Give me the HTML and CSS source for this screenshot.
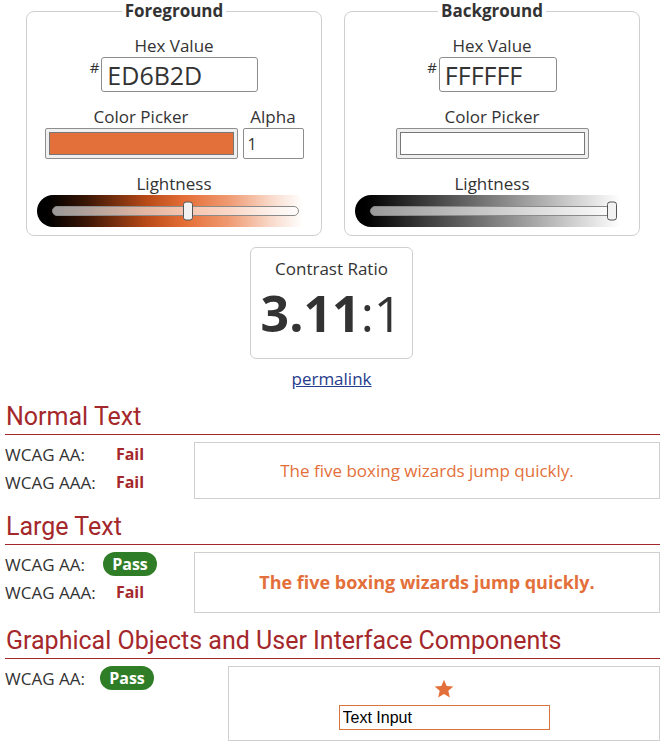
FILE: index.html
```html
<!DOCTYPE html>
<html lang="en">
<head>
<meta charset="utf-8">
<title>Contrast Checker</title>
<link rel="stylesheet" href="styles.css">
</head>
<body>
<div class="editors">
  <fieldset class="editor">
    <legend>Foreground</legend>
    <div class="field">
      <label class="lbl" for="fg">Hex Value</label>
      <div class="hex-row">
        <span class="hash">#</span>
        <input class="hex-input hex-fg" id="fg" value="ED6B2D">
      </div>
    </div>
    <div class="picker-row">
      <div class="field">
        <span class="lbl">Color Picker</span>
        <div class="picker"><div class="swatch swatch-fg"></div></div>
      </div>
      <div class="field">
        <label class="lbl" for="alpha">Alpha</label>
        <input class="alpha" id="alpha" value="1">
      </div>
    </div>
    <div class="field light">
      <span class="lbl">Lightness</span>
      <div class="slider slider-fg">
        <div class="track"><div class="thumb" style="left:55.3%"></div></div>
      </div>
    </div>
  </fieldset>
  <fieldset class="editor">
    <legend>Background</legend>
    <div class="field">
      <label class="lbl" for="bg">Hex Value</label>
      <div class="hex-row">
        <span class="hash">#</span>
        <input class="hex-input hex-bg" id="bg" value="FFFFFF">
      </div>
    </div>
    <div class="picker-row">
      <div class="field">
        <span class="lbl">Color Picker</span>
        <div class="picker"><div class="swatch swatch-bg"></div></div>
      </div>
    </div>
    <div class="field light">
      <span class="lbl">Lightness</span>
      <div class="slider slider-bg">
        <div class="track"><div class="thumb" style="left:100%"></div></div>
      </div>
    </div>
  </fieldset>
</div>

<div class="ratio-box">
  <div class="ratio-title">Contrast Ratio</div>
  <div class="ratio"><b>3.11</b>:1</div>
</div>
<div class="perma"><a href="#">permalink</a></div>

<div class="results">
  <section class="result">
    <h2>Normal Text</h2>
    <div class="result-body">
      <div class="checks">
        <div class="check"><span class="clabel">WCAG AA:</span><span class="res fail">Fail</span></div>
        <div class="check"><span class="clabel">WCAG AAA:</span><span class="res fail">Fail</span></div>
      </div>
      <div class="sample sample-normal">The five boxing wizards jump quickly.</div>
    </div>
  </section>
  <section class="result">
    <h2>Large Text</h2>
    <div class="result-body">
      <div class="checks">
        <div class="check"><span class="clabel">WCAG AA:</span><span class="res pass">Pass</span></div>
        <div class="check"><span class="clabel">WCAG AAA:</span><span class="res fail">Fail</span></div>
      </div>
      <div class="sample sample-large">The five boxing wizards jump quickly.</div>
    </div>
  </section>
  <section class="result">
    <h2>Graphical Objects and User Interface Components</h2>
    <div class="result-body">
      <div class="checks checks-ui">
        <div class="check"><span class="clabel">WCAG AA:</span><span class="res pass">Pass</span></div>
      </div>
      <div class="sample sample-ui">
        <svg class="star" viewBox="0 0 24 24" width="22" height="22" aria-hidden="true"><path d="M12 1.8l2.9 6.8 7.3.6-5.5 4.8 1.7 7.2L12 17.4l-6.4 3.8 1.7-7.2-5.5-4.8 7.3-.6z"/></svg>
        <input class="ui-input" value="Text Input">
      </div>
    </div>
  </section>
</div>
</body>
</html>
```

FILE: styles.css
```css
* { box-sizing: border-box; }
body {
  margin: 0;
  font-family: "Open Sans", "Liberation Sans", sans-serif;
  color: #333;
  background: #fff;
  font-size: 17px;
}
.editors {
  display: flex;
  gap: 22px;
  padding-left: 26px;
}
.editor {
  width: 296px;
  min-width: 0;
  margin: 0;
  padding: 12px 10px 8px;
  border: 1px solid #cfcfcf;
  border-radius: 8px;
}
.editor legend {
  margin: 0 auto;
  padding: 0 3px;
  font-weight: 700;
  font-size: 17px;
  line-height: 22px;
}
.field {
  display: flex;
  flex-direction: column;
  align-items: center;
}
.lbl {
  font-size: 17px;
  line-height: 23px;
}
.hex-row {
  display: flex;
  align-items: flex-start;
  justify-content: center;
}
.hash {
  font-size: 15px;
  line-height: 20px;
  margin-right: 2px;
}
.hex-input {
  height: 35px;
  padding: 0 5px;
  border: 1px solid #8d8d8d;
  border-radius: 3px;
  font-family: "Open Sans", sans-serif;
  font-size: 25px;
  color: #333;
  background: #fff;
}
.hex-fg { width: 157px; }
.hex-bg { width: 118px; }
.picker-row {
  display: flex;
  justify-content: center;
  gap: 5px;
  margin-top: 13px;
}
.picker {
  width: 193px;
  height: 31px;
  padding: 3px;
  background: #efefef;
  border: 1px solid #8f8f8f;
  border-radius: 2px;
}
.swatch {
  height: 100%;
  border: 1px solid #777;
}
.swatch-fg { background: #e3703a; }
.swatch-bg { background: #fff; }
.alpha {
  width: 61px;
  height: 31px;
  padding: 0 4px;
  border: 1px solid #8d8d8d;
  border-radius: 2px;
  font-family: "Open Sans", sans-serif;
  font-size: 16px;
  color: #333;
}
.light { margin-top: 13px; align-items: stretch; }
.light .lbl { text-align: center; }
.slider {
  height: 32px;
  border-radius: 16px;
  padding: 0 12px 0 15px;
  display: flex;
  align-items: center;
}
.slider-fg {
  background: linear-gradient(to right, #000 4%, #3a1605 18%, #b84a18 40%, #e56e36 54%, #ef9a72 70%, #f9dccd 86%, #fff 97%);
}
.slider-bg {
  background: linear-gradient(to right, #000 4%, #3a3a3a 25%, #8a8a8a 55%, #d0d0d0 80%, #fff 97%);
}
.track {
  position: relative;
  flex: 1;
  height: 10px;
  border: 1px solid #8a8a8a;
  border-radius: 5px;
  background: rgba(255, 255, 255, 0.6);
}
.thumb {
  position: absolute;
  top: 50%;
  width: 10px;
  height: 19px;
  margin-left: -5px;
  transform: translateY(-50%);
  background: #f2f2f2;
  border: 1px solid #555;
  border-radius: 3px;
}
.slider-bg .thumb { margin-left: -9px; }

.ratio-box {
  width: 163px;
  margin: 11px auto 0;
  padding: 9px 0 12px;
  border: 1px solid #cfcfcf;
  border-radius: 6px;
  text-align: center;
}
.ratio-title {
  font-size: 17px;
  line-height: 23px;
}
.ratio {
  font-size: 50px;
  line-height: 66px;
  color: #333;
}
.ratio b { font-weight: 700; }
.perma {
  margin-top: 8px;
  text-align: center;
  line-height: 23px;
  font-size: 17px;
}
.perma a { color: #263c8c; }

.results {
  padding: 0 3px 0 5px;
}
.result h2 {
  margin: 12px 0 0;
  padding: 0 0 2px 1px;
  font-family: Roboto, "Liberation Sans", sans-serif;
  font-weight: 400;
  font-size: 25px;
  line-height: 30px;
  color: #a4282b;
  border-bottom: 1px solid #a4282b;
}
.result + .result h2 { margin-top: 13px; }
.result-body {
  display: flex;
  align-items: flex-start;
  margin-top: 7px;
}
.checks {
  width: 189px;
  margin-top: -2px;
  flex: none;
}
.checks-ui { width: 223px; }
.check {
  display: flex;
  align-items: center;
  height: 28px;
  font-size: 17px;
}
.clabel { width: 98px; }
.checks-ui .clabel { width: 95px; }
.res {
  width: 54px;
  text-align: center;
  font-weight: 700;
  font-size: 16px;
}
.fail { color: #a4282b; }
.pass {
  height: 24px;
  line-height: 24px;
  border-radius: 12px;
  background: #2f7d26;
  color: #fff;
}
.sample {
  flex: 1;
  border: 1px solid #cfcfcf;
  text-align: center;
  color: #e3703a;
}
.sample-normal {
  padding: 16px;
  font-size: 17px;
  line-height: 23px;
}
.sample-large {
  padding: 17px;
  font-size: 18px;
  line-height: 25px;
  font-weight: 700;
}
.sample-ui {
  padding: 11px 0 10px;
  display: flex;
  flex-direction: column;
  align-items: center;
  gap: 5px;
}
.star { fill: #e3703a; display: block; }
.ui-input {
  width: 211px;
  height: 25px;
  padding: 0 3px;
  border: 1px solid #d9743f;
  font-family: "Liberation Sans", Arial, sans-serif;
  font-size: 16px;
  color: #000;
  background: #fff;
}
```
